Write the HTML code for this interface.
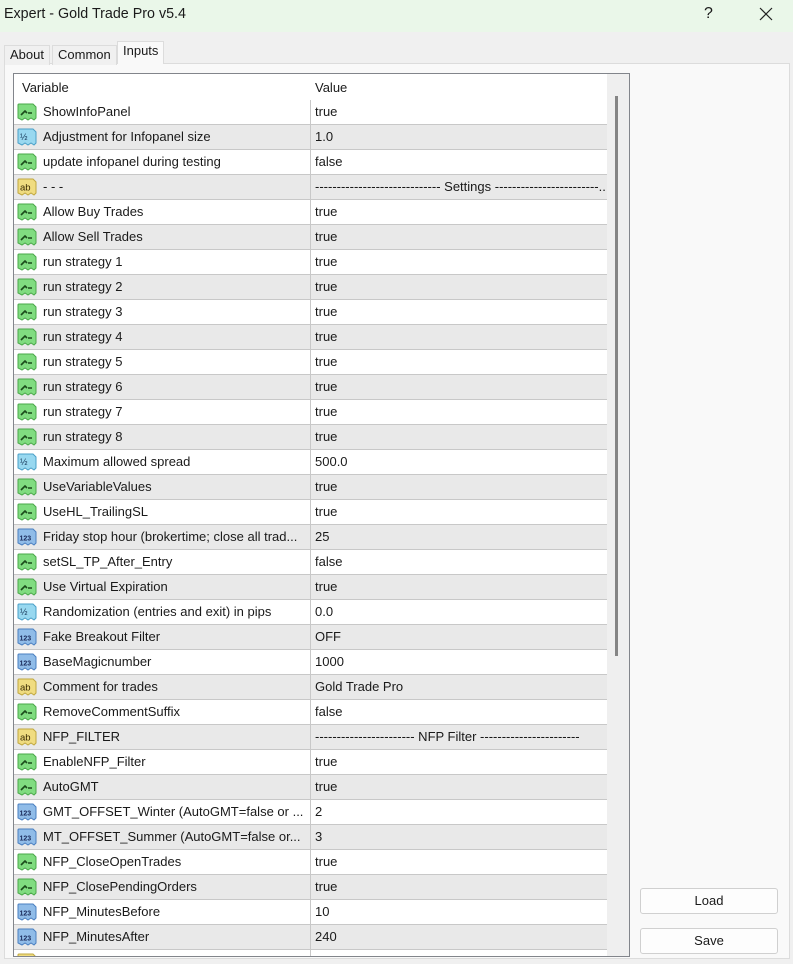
<!DOCTYPE html>
<html><head><meta charset="utf-8"><style>
*{box-sizing:border-box;margin:0;padding:0}
body{width:793px;height:964px;background:#f0f0f0;font-family:"Liberation Sans",sans-serif;font-size:13px;color:#1a1a1a;position:relative;overflow:hidden}
.title{position:absolute;left:0;top:0;width:793px;height:32px;background:#eaf7e9;font-size:14.3px;line-height:28px;padding-left:4px}
.q{position:absolute;left:704px;top:0;font-size:16px}
.tab{position:absolute;top:44px;height:20px;font-size:13px;line-height:18px;padding:0 5px;border:1px solid #dcdcdc;border-bottom:none;background:#f0f0f0}
.panel{position:absolute;left:4px;top:63px;width:786px;height:896px;background:#f9f9f9;border:1px solid #dcdcdc}
.list{position:absolute;left:13px;top:73px;width:617px;height:884px;border:1px solid #82858b;background:#fff;overflow:hidden}
.hdr{height:26px;line-height:27px;position:relative;background:#fff}
.hdr span{position:absolute}
.row{height:25px;line-height:24px;position:relative;border-bottom:1px solid #c8c8c8;width:593px}
.row:nth-child(even){background:#e9e9e9}
.row .ic{position:absolute;left:3px;top:3px;width:20px;height:18px}
.row .n{position:absolute;left:29px;white-space:nowrap;width:266px;overflow:hidden}
.row .v{position:absolute;left:301px;white-space:nowrap}
.row:after{content:"";position:absolute;left:296px;top:0;width:1px;height:25px;background:#c8c8c8}
.sb{position:absolute;left:593px;top:0;width:22px;height:884px;background:#efefef}
.thumb{position:absolute;left:8px;top:22px;width:3px;height:560px;background:#858585}
.btn{position:absolute;left:640px;width:138px;height:26px;border:1px solid #d0d0d0;border-radius:3px;background:#fdfdfd;text-align:center;line-height:24px;font-size:13px}
</style></head><body>
<div class="title">Expert - Gold Trade Pro v5.4<span class="q">?</span><svg style="position:absolute;left:759px;top:7px" width="14" height="14"><path d="M1 1L13 13M13 1L1 13" stroke="#222" stroke-width="1.2"/></svg></div>
<div class="panel"></div>
<div class="tab" style="left:4px;top:45px">About</div>
<div class="tab" style="left:52px;top:45px">Common</div>
<div class="tab" style="left:117px;top:41px;height:23px;background:#f9f9f9">Inputs</div>
<svg width="0" height="0" style="position:absolute"><defs>
<g id="b"><path d="M1 2 Q1 1 2 1 H16 L19 4 V15 L17 17 L14 15 L11 17 L8 15 L5 17 L1 15Z" fill="#80dc80" stroke="#4aa84a"/><path d="M4 12 L8 8 L10 10 M11 10 H15" stroke="#1a4a1a" stroke-width="1.6" fill="none"/></g>
<g id="h"><path d="M1 2 Q1 1 2 1 H16 L19 4 V15 L17 17 L14 15 L11 17 L8 15 L5 17 L1 15Z" fill="#98d8f0" stroke="#4aa0c8"/><text x="3" y="12" font-size="9" font-family="Liberation Sans" fill="#1a3a5a">½</text></g>
<g id="n"><path d="M1 2 Q1 1 2 1 H16 L19 4 V15 L17 17 L14 15 L11 17 L8 15 L5 17 L1 15Z" fill="#90bce8" stroke="#4a7fc0"/><text x="2.5" y="12.5" font-size="7" font-weight="bold" font-family="Liberation Sans" fill="#1a2a5a">123</text></g>
<g id="a"><path d="M1 2 Q1 1 2 1 H16 L19 4 V15 L17 17 L14 15 L11 17 L8 15 L5 17 L1 15Z" fill="#f0dc80" stroke="#c0a840"/><text x="3" y="12.5" font-size="9.5" font-family="Liberation Sans" fill="#3a2a00">ab</text></g>
</defs></svg>
<div class="list">
<div class="hdr"><span style="left:8px">Variable</span><span style="left:301px">Value</span></div>
<div>
<div class="row"><svg class="ic"><use href="#b"/></svg><span class="n">ShowInfoPanel</span><span class="v">true</span></div>
<div class="row"><svg class="ic"><use href="#h"/></svg><span class="n">Adjustment for Infopanel size</span><span class="v">1.0</span></div>
<div class="row"><svg class="ic"><use href="#b"/></svg><span class="n">update infopanel during testing</span><span class="v">false</span></div>
<div class="row"><svg class="ic"><use href="#a"/></svg><span class="n">- - -</span><span class="v">----------------------------- Settings ------------------------...</span></div>
<div class="row"><svg class="ic"><use href="#b"/></svg><span class="n">Allow Buy Trades</span><span class="v">true</span></div>
<div class="row"><svg class="ic"><use href="#b"/></svg><span class="n">Allow Sell Trades</span><span class="v">true</span></div>
<div class="row"><svg class="ic"><use href="#b"/></svg><span class="n">run strategy 1</span><span class="v">true</span></div>
<div class="row"><svg class="ic"><use href="#b"/></svg><span class="n">run strategy 2</span><span class="v">true</span></div>
<div class="row"><svg class="ic"><use href="#b"/></svg><span class="n">run strategy 3</span><span class="v">true</span></div>
<div class="row"><svg class="ic"><use href="#b"/></svg><span class="n">run strategy 4</span><span class="v">true</span></div>
<div class="row"><svg class="ic"><use href="#b"/></svg><span class="n">run strategy 5</span><span class="v">true</span></div>
<div class="row"><svg class="ic"><use href="#b"/></svg><span class="n">run strategy 6</span><span class="v">true</span></div>
<div class="row"><svg class="ic"><use href="#b"/></svg><span class="n">run strategy 7</span><span class="v">true</span></div>
<div class="row"><svg class="ic"><use href="#b"/></svg><span class="n">run strategy 8</span><span class="v">true</span></div>
<div class="row"><svg class="ic"><use href="#h"/></svg><span class="n">Maximum allowed spread</span><span class="v">500.0</span></div>
<div class="row"><svg class="ic"><use href="#b"/></svg><span class="n">UseVariableValues</span><span class="v">true</span></div>
<div class="row"><svg class="ic"><use href="#b"/></svg><span class="n">UseHL_TrailingSL</span><span class="v">true</span></div>
<div class="row"><svg class="ic"><use href="#n"/></svg><span class="n">Friday stop hour (brokertime; close all trad...</span><span class="v">25</span></div>
<div class="row"><svg class="ic"><use href="#b"/></svg><span class="n">setSL_TP_After_Entry</span><span class="v">false</span></div>
<div class="row"><svg class="ic"><use href="#b"/></svg><span class="n">Use Virtual Expiration</span><span class="v">true</span></div>
<div class="row"><svg class="ic"><use href="#h"/></svg><span class="n">Randomization (entries and exit) in pips</span><span class="v">0.0</span></div>
<div class="row"><svg class="ic"><use href="#n"/></svg><span class="n">Fake Breakout Filter</span><span class="v">OFF</span></div>
<div class="row"><svg class="ic"><use href="#n"/></svg><span class="n">BaseMagicnumber</span><span class="v">1000</span></div>
<div class="row"><svg class="ic"><use href="#a"/></svg><span class="n">Comment for trades</span><span class="v">Gold Trade Pro</span></div>
<div class="row"><svg class="ic"><use href="#b"/></svg><span class="n">RemoveCommentSuffix</span><span class="v">false</span></div>
<div class="row"><svg class="ic"><use href="#a"/></svg><span class="n">NFP_FILTER</span><span class="v">----------------------- NFP Filter -----------------------</span></div>
<div class="row"><svg class="ic"><use href="#b"/></svg><span class="n">EnableNFP_Filter</span><span class="v">true</span></div>
<div class="row"><svg class="ic"><use href="#b"/></svg><span class="n">AutoGMT</span><span class="v">true</span></div>
<div class="row"><svg class="ic"><use href="#n"/></svg><span class="n">GMT_OFFSET_Winter (AutoGMT=false or ...</span><span class="v">2</span></div>
<div class="row"><svg class="ic"><use href="#n"/></svg><span class="n">MT_OFFSET_Summer (AutoGMT=false or...</span><span class="v">3</span></div>
<div class="row"><svg class="ic"><use href="#b"/></svg><span class="n">NFP_CloseOpenTrades</span><span class="v">true</span></div>
<div class="row"><svg class="ic"><use href="#b"/></svg><span class="n">NFP_ClosePendingOrders</span><span class="v">true</span></div>
<div class="row"><svg class="ic"><use href="#n"/></svg><span class="n">NFP_MinutesBefore</span><span class="v">10</span></div>
<div class="row"><svg class="ic"><use href="#n"/></svg><span class="n">NFP_MinutesAfter</span><span class="v">240</span></div>
<div class="row"><svg class="ic"><use href="#a"/></svg><span class="n"></span><span class="v"></span></div>
</div>
<div class="sb"><div class="thumb"></div></div>
</div>
<div class="btn" style="top:888px">Load</div>
<div class="btn" style="top:928px">Save</div>
</body></html>
